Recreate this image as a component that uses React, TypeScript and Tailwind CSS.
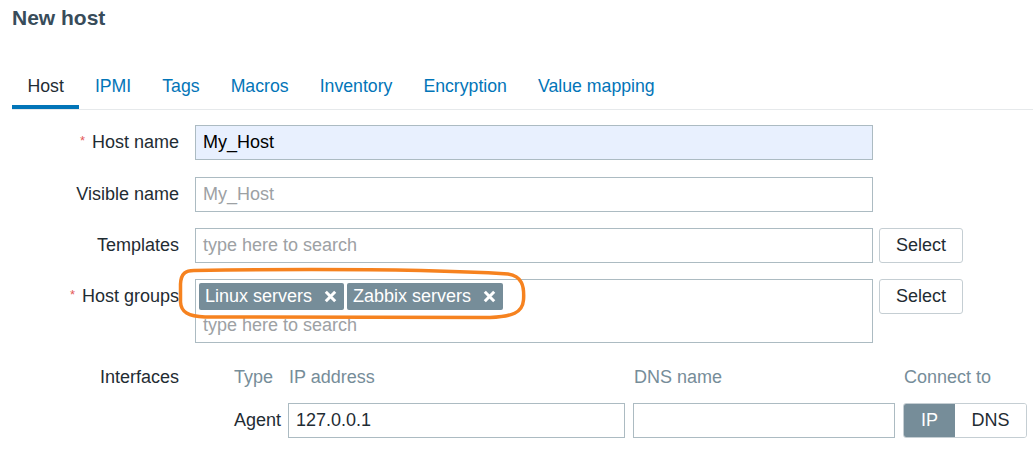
import React from "react";

const F = { fontFamily: '"Liberation Sans", Arial, sans-serif' };

function XIcon() {
  return (
    <svg width="13" height="13" viewBox="0 0 13 13" className="block">
      <path d="M1.8 1.8 L11.2 11.2 M11.2 1.8 L1.8 11.2" stroke="white" strokeWidth="3" strokeLinecap="butt" />
    </svg>
  );
}

function Tag({ text }: { text: string }) {
  return (
    <div className="flex items-center h-[27px] bg-[#768d99] rounded-[2px] pl-[6px] pr-[7px] text-white text-[18px] leading-[27px]">
      <span>{text}</span>
      <span className="ml-[12px]"><XIcon /></span>
    </div>
  );
}

function Label({ text, required }: { text: string; required?: boolean }) {
  return (
    <div className="w-[179px] shrink-0 text-right text-[18px] text-[#1f2c33] h-[35px] leading-[35px] whitespace-nowrap">
      {required && <span className="text-[#e45959] text-[13px] relative -top-[3px] mr-[7px]">*</span>}
      {text}
    </div>
  );
}

export default function App() {
  const tabs = ["Host", "IPMI", "Tags", "Macros", "Inventory", "Encryption", "Value mapping"];
  return (
    <div className="relative w-[1033px] h-[458px] bg-white overflow-hidden" style={F}>
      <div className="pl-[12px] pt-[6px]">
        <h1 className="text-[21px] leading-[24px] font-bold text-[#384c5a]">New host</h1>
      </div>

      <div className="ml-[12px] mt-[46px] flex border-b border-[#e6e9eb]">
        {tabs.map((t, i) => (
          <div
            key={t}
            className={
              "px-[15.5px] text-[17.7px] leading-[20px] pb-[9px] border-b-4 " +
              (i === 0 ? "border-[#0275b8] text-[#1f2c33]" : "border-transparent text-[#0275b8]")
            }
          >
            {t}
          </div>
        ))}
      </div>

      <div className="mt-[15px] flex flex-col gap-[16px]">
        <div className="flex items-start gap-[16px]">
          <Label text="Host name" required />
          <div className="w-[678px] h-[35px] border border-[#acbbc2] bg-[#e8f0fe] pl-[7px] text-[18px] leading-[33px] text-black">
            My_Host
          </div>
        </div>
        <div className="flex items-start gap-[16px] mt-[1px]">
          <Label text="Visible name" />
          <div className="w-[678px] h-[35px] border border-[#acbbc2] bg-white pl-[7px] text-[18px] leading-[33px] text-[#9da1a4]">
            My_Host
          </div>
        </div>
        <div className="flex items-start gap-[16px]">
          <Label text="Templates" />
          <div className="w-[678px] h-[35px] border border-[#acbbc2] bg-white pl-[7px] text-[18px] leading-[33px] text-[#9da1a4]">
            type here to search
          </div>
          <button className="-ml-[10px] w-[84px] h-[35px] border border-[#c5ced3] rounded-[3px] bg-white text-[18px] text-[#1f2c33]">
            Select
          </button>
        </div>
        <div className="flex items-start gap-[16px]">
          <Label text="Host groups" required />
          <div className="w-[678px] h-[64px] border border-[#acbbc2] bg-white pt-[3px] pl-[3px]">
            <div className="flex gap-[3px]">
              <Tag text="Linux servers" />
              <Tag text="Zabbix servers" />
            </div>
            <div className="pl-[4px] h-[31px] text-[18px] leading-[31px] text-[#9da1a4]">type here to search</div>
          </div>
          <button className="-ml-[10px] w-[84px] h-[35px] border border-[#c5ced3] rounded-[3px] bg-white text-[18px] text-[#1f2c33]">
            Select
          </button>
        </div>

        <div className="flex items-start gap-[16px] mt-[6px]">
          <div className="w-[179px] shrink-0 text-right text-[18px] text-[#1f2c33] h-[24px] leading-[24px]">Interfaces</div>
          <div className="ml-[39px] grid grid-cols-[46px_337px_262px_124px] gap-x-[8px] gap-y-[14px]">
            <div className="text-[18px] leading-[24px] text-[#768d99] whitespace-nowrap">Type</div>
            <div className="text-[18px] leading-[24px] text-[#768d99] pl-[1px]">IP address</div>
            <div className="text-[18px] leading-[24px] text-[#768d99] pl-[1px]">DNS name</div>
            <div className="text-[18px] leading-[24px] text-[#768d99] pl-[1px] whitespace-nowrap">Connect to</div>

            <div className="text-[18px] leading-[35px] text-[#1f2c33] whitespace-nowrap">Agent</div>
            <div className="h-[35px] border border-[#acbbc2] bg-white pl-[7px] text-[18px] leading-[33px] text-[#1f2c33]">127.0.0.1</div>
            <div className="h-[35px] border border-[#acbbc2] bg-white"></div>
            <div className="flex h-[35px] rounded-[3px] border border-[#c5ced3] overflow-hidden text-[18px]">
              <div className="w-[51px] bg-[#768d99] text-white flex items-center justify-center">IP</div>
              <div className="flex-1 bg-white text-[#1f2c33] flex items-center justify-center">DNS</div>
            </div>
          </div>
        </div>
      </div>

      <svg className="absolute inset-0 pointer-events-none" width="1033" height="458" viewBox="0 0 1033 458">
        <path
          d="M194 270.5 C 300 269, 430 269.5, 508 274 C 522 276, 524.5 286, 523.5 300 C 522.5 313, 512 316.5, 490 317.5 L 205 317 C 188 316.5, 181 312, 180.5 302 L 180.5 284 C 181 273, 186 270.5, 194 270.5 Z"
          fill="none"
          stroke="#f6821f"
          strokeWidth="3.5"
        />
      </svg>
    </div>
  );
}
